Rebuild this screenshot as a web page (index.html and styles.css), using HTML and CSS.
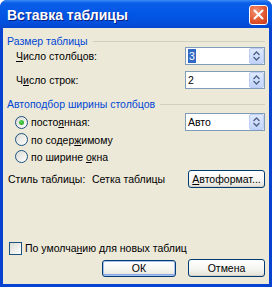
FILE: index.html
```html
<!DOCTYPE html>
<html lang="ru">
<head>
    <meta charset="UTF-8">
    <title>Вставка таблицы</title>
    <link rel="stylesheet" href="styles.css">
</head>
<body>
    <div class="window">
        <div class="titlebar">
            <span class="title">Вставка таблицы</span>
            <span class="close">
                <svg width="11" height="11" viewBox="0 0 11 11"><path d="M1.5 1.5 L9.5 9.5 M9.5 1.5 L1.5 9.5" stroke="#fff" stroke-width="2" stroke-linecap="round"/></svg>
            </span>
        </div>
        <div class="client">
            <div class="group-head"><span>Размер таблицы</span><i></i></div>
            <div class="row indent">
                <span class="label"><u>Ч</u>исло столбцов:</span>
                <div class="spin"><span class="value"><b class="sel">3</b></span><span class="arrows"><svg width="7" height="10" viewBox="0 0 7 10"><path d="M0.5 4 L3.5 1 L6.5 4 M0.5 6 L3.5 9 L6.5 6" fill="none" stroke="#4d6185" stroke-width="1.3"/></svg></span></div>
            </div>
            <div class="row indent gap">
                <span class="label">Ч<u>и</u>сло строк:</span>
                <div class="spin"><span class="value">2</span><span class="arrows"><svg width="7" height="10" viewBox="0 0 7 10"><path d="M0.5 4 L3.5 1 L6.5 4 M0.5 6 L3.5 9 L6.5 6" fill="none" stroke="#4d6185" stroke-width="1.3"/></svg></span></div>
            </div>

            <div class="group-head second"><span>Автоподбор ширины столбцов</span><i></i></div>
            <div class="row radio-row first">
                <span class="option"><span class="radio on"></span><span>посто<u>я</u>нная:</span></span>
                <div class="spin"><span class="value">Авто</span><span class="arrows"><svg width="7" height="10" viewBox="0 0 7 10"><path d="M0.5 4 L3.5 1 L6.5 4 M0.5 6 L3.5 9 L6.5 6" fill="none" stroke="#4d6185" stroke-width="1.3"/></svg></span></div>
            </div>
            <div class="row radio-row">
                <span class="option"><span class="radio"></span><span>по содер<u>ж</u>имому</span></span>
            </div>
            <div class="row radio-row">
                <span class="option"><span class="radio"></span><span>по ширине <u>о</u>кна</span></span>
            </div>

            <div class="row style-row">
                <span class="style-label">Стиль таблицы:</span>
                <span class="style-name">Сетка таблицы</span>
                <button class="btn"><u>А</u>втоформат...</button>
            </div>

            <div class="spacer"></div>

            <div class="check-row">
                <span class="check"></span><span>По умолча<u>н</u>ию для новых таблиц</span>
            </div>
            <div class="buttons">
                <button class="btn default">ОК</button>
                <button class="btn">Отмена</button>
            </div>
        </div>
    </div>
</body>
</html>
```

FILE: styles.css
```css
body {
    margin: 0;
    background: #fff;
    font-family: "Liberation Sans", Arial, sans-serif;
    font-size: 10.5px;
    color: #000;
}
.window {
    width: 272px;
    height: 287px;
    display: flex;
    flex-direction: column;
    background: #0842d0;
    border-radius: 7px 7px 0 0;
    box-sizing: border-box;
}
.titlebar {
    height: 28px;
    flex: none;
    display: flex;
    align-items: center;
    justify-content: space-between;
    padding: 0 4px 0 7px;
    border-radius: 7px 7px 0 0;
    background: linear-gradient(#3b8cf5 0, #0a5ee8 3px, #0258e6 45%, #0250dd 80%, #0347cf 100%);
}
.title {
    color: #fff;
    font-weight: bold;
    font-size: 14px;
    text-shadow: 1px 1px #0a1f80;
    padding-top: 1px;
}
.close {
    width: 17px;
    height: 18px;
    display: flex;
    align-items: center;
    justify-content: center;
    border: 1px solid #fff;
    border-radius: 3px;
    background: radial-gradient(circle at 35% 30%, #f29477 0, #e2572f 55%, #c8381a 100%);
    margin-top: 1px;
}
.client {
    flex: 1;
    margin: 0 3px 3px;
    background: #ece9d8;
    display: flex;
    flex-direction: column;
    padding: 6px 4px 7px 4px;
}
.group-head {
    height: 13px;
    display: flex;
    align-items: center;
    color: #0046d5;
}
.group-head i {
    flex: 1;
    height: 1px;
    background: #d0d0bf;
    margin: 1px 0 0 5px;
}
.group-head.second {
    margin-top: 8px;
}
.row {
    display: flex;
    align-items: center;
    justify-content: space-between;
    height: 18px;
}
.indent {
    padding-left: 9px;
}
.gap {
    margin-top: 6px;
}
.spin {
    width: 80px;
    height: 18px;
    box-sizing: border-box;
    border: 1px solid #7f9db9;
    background: #fff;
    display: flex;
    align-items: center;
    justify-content: space-between;
}
.value {
    padding-left: 2px;
}
.sel {
    display: inline-block;
    font-weight: normal;
    background: #316ac5;
    color: #fff;
    padding: 1px 1px;
    line-height: 12px;
}
.arrows {
    width: 15px;
    height: 16px;
    display: flex;
    align-items: center;
    justify-content: center;
    box-sizing: border-box;
    border: 1px solid #bccef5;
    border-radius: 2px;
    background: linear-gradient(#dfe9fd, #c2d4fa);
}
.radio-row {
    height: 17px;
    padding-left: 8px;
}
.radio-row.first {
    height: 18px;
    margin-top: 3px;
}
.option {
    display: flex;
    align-items: center;
}
.radio {
    width: 13px;
    height: 13px;
    box-sizing: border-box;
    border: 1px solid #1c5180;
    border-radius: 50%;
    background: linear-gradient(135deg, #dcdbd4, #fff);
    margin-right: 3px;
    display: flex;
    align-items: center;
    justify-content: center;
}
.radio.on::after {
    content: "";
    width: 5px;
    height: 5px;
    border-radius: 50%;
    background: radial-gradient(circle at 40% 35%, #55d655, #21a121);
}
.style-row {
    margin-top: 5px;
    justify-content: flex-start;
    padding-left: 1px;
}
.style-label {
    width: 84px;
}
.style-name {
    flex: 1;
}
.btn {
    font: inherit;
    color: #000;
    width: 77px;
    height: 18px;
    padding: 0;
    border: 1px solid #003c74;
    border-radius: 3px;
    background: linear-gradient(#fff 0, #f4f4f0 60%, #e3e1d6 100%);
    box-shadow: inset 0 -1px #d6d0c5;
}
.btn.default {
    width: 74px;
    height: 17px;
    box-shadow: inset 0 0 0 1px #a8c0ee, inset 0 -2px #8aaae6;
}
.spacer {
    flex: 1;
}
.check-row {
    height: 14px;
    display: flex;
    align-items: center;
    padding-left: 2px;
}
.check {
    width: 13px;
    height: 13px;
    box-sizing: border-box;
    border: 1px solid #1c5180;
    background: linear-gradient(135deg, #dcdbd4, #fff);
    margin-right: 3px;
}
.buttons {
    margin-top: 4px;
    display: flex;
    justify-content: flex-end;
    align-items: center;
    gap: 12px;
}
```
